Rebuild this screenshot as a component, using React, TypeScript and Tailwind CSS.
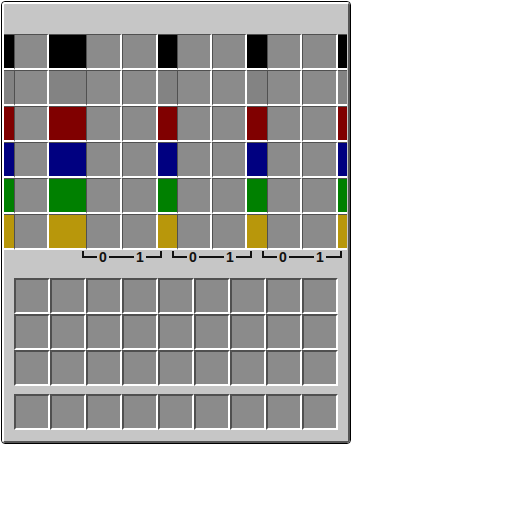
import React from "react";

// one row of the palette grid: colour strips partly hidden behind the slots
const segments: { w: number; kind: "color" | "slot" }[] = [
  { w: 10, kind: "color" },
  { w: 35, kind: "slot" },
  { w: 37, kind: "color" },
  { w: 36, kind: "slot" },
  { w: 36, kind: "slot" },
  { w: 19, kind: "color" },
  { w: 35, kind: "slot" },
  { w: 35, kind: "slot" },
  { w: 20, kind: "color" },
  { w: 35, kind: "slot" },
  { w: 36, kind: "slot" },
  { w: 9, kind: "color" },
];

const rowColors = [
  "bg-[#000000]",
  "bg-[#838383]",
  "bg-[#800000]",
  "bg-[#000080]",
  "bg-[#008000]",
  "bg-[#b8970b]",
];

function GridRow({ color }: { color: string }) {
  return (
    <div className="flex h-[36px]">
      {segments.map((s, i) =>
        s.kind === "slot" ? (
          <div
            key={i}
            style={{ width: s.w }}
            className="h-full shrink-0 border-t border-l border-[#505050] border-b-2 border-r-2 border-b-white border-r-white bg-[#8b8b8b]"
          />
        ) : (
          <div
            key={i}
            style={{ width: s.w }}
            className={`h-full shrink-0 border-t border-[#505050] border-b-2 border-b-white ${color}`}
          />
        )
      )}
    </div>
  );
}

function Bracket() {
  return (
    <div className="flex h-[12px] w-[80px] items-center text-[14px] font-bold leading-none text-[#111111]">
      <div className="w-[15px] h-[7px] self-start border-l-2 border-b-2 border-[#111111]" />
      <span className="w-[12px] text-center">0</span>
      <div className="w-[25px] h-[2px] self-start mt-[5px] bg-[#111111]" />
      <span className="w-[12px] text-center">1</span>
      <div className="w-[16px] h-[7px] self-start border-r-2 border-b-2 border-[#111111]" />
    </div>
  );
}

function Slot() {
  return (
    <div className="w-[36px] h-[36px] shrink-0 border-2 border-t-[#505050] border-l-[#505050] border-b-white border-r-white bg-[#8b8b8b]" />
  );
}

function SlotRow() {
  return (
    <div className="flex">
      {Array.from({ length: 9 }).map((_, i) => (
        <Slot key={i} />
      ))}
    </div>
  );
}

export default function App() {
  return (
    <div className="w-[512px] h-[512px] bg-white pl-px pt-px" style={{ fontFamily: '"Liberation Sans", Arial, sans-serif' }}>
      <div className="w-[350px] h-[443px] border border-black rounded-[4px] overflow-hidden">
        <div className="h-full flex flex-col border-2 border-t-white border-l-white border-r-[#555555] border-b-[#555555] bg-[#c6c6c6] rounded-[3px] pt-[30px]">
          <div className="flex flex-col">
            {rowColors.map((c) => (
              <GridRow key={c} color={c} />
            ))}
          </div>

          <div className="flex gap-[10px] pl-[78px] mt-px">
            <Bracket />
            <Bracket />
            <Bracket />
          </div>

          <div className="flex flex-col pl-[10px] mt-[15px]">
            <SlotRow />
            <SlotRow />
            <SlotRow />
            <div className="mt-[8px]">
              <SlotRow />
            </div>
          </div>
        </div>
      </div>
    </div>
  );
}
